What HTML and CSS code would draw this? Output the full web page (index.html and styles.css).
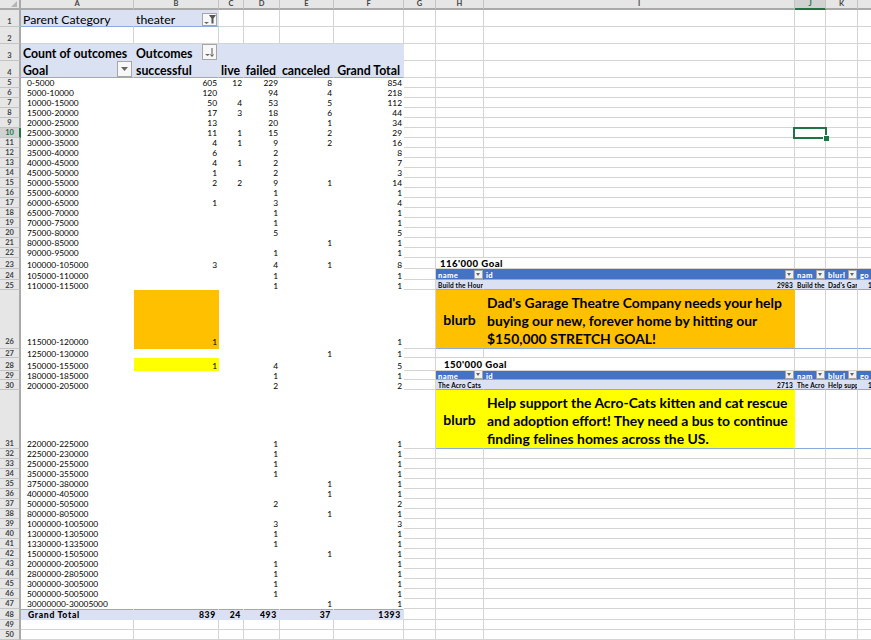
FILE: index.html
```html
<!DOCTYPE html>
<html lang="en">
<head>
    <meta charset="UTF-8">
    <meta name="viewport" content="width=device-width, initial-scale=1.0">
    <title>Theater outcomes</title>
    <link rel="stylesheet" href="styles.css">
</head>
<body>
<table class="sheet">
    <colgroup>
        <col class="c-hd"><col class="c-a"><col class="c-b"><col class="c-c"><col class="c-d"><col class="c-e"><col class="c-f"><col class="c-g"><col class="c-h"><col class="c-i"><col class="c-j"><col class="c-k"><col class="c-l">
    </colgroup>
    <tr class="heads">
        <th class="corner"></th><th>A</th><th>B</th><th>C</th><th>D</th><th>E</th><th>F</th><th>G</th><th>H</th><th>I</th><th class="sel-col">J</th><th>K</th><th></th>
    </tr>
    <tr class="h17 page-filter"><th>1</th><td class="big">Parent Category</td><td class="big">theater<span class="btn btn-funnel"><svg width="15" height="12" viewBox="0 0 15 12"><path d="M2 9h5l-2.500 2z" fill="#666"/><path d="M7 2h7l-2.500 3.500v5h-2v-5z" fill="#555"/></svg></span></td><td></td><td></td><td></td><td></td><td></td><td></td><td></td><td></td><td></td><td></td></tr>
    <tr class="h17"><th>2</th><td></td><td></td><td></td><td></td><td></td><td></td><td></td><td></td><td></td><td></td><td></td><td></td></tr>
    <tr class="h17 pv-head"><th>3</th><td>Count of outcomes</td><td>Outcomes<span class="btn btn-sort"><svg width="15" height="16" viewBox="0 0 15 16"><path d="M3 10h5l-2.500 2z" fill="#666"/><path d="M10 4v8M8.500 10.500l1.500 2 1.500-2" stroke="#555" fill="none"/></svg></span></td><td></td><td></td><td></td><td></td><td></td><td></td><td></td><td></td><td></td><td></td></tr>
    <tr class="h17 pv-head pv-last"><th>4</th><td>Goal<span class="btn btn-drop"><svg width="15" height="16" viewBox="0 0 15 16"><path d="M4 6h7l-3.500 4z" fill="#666"/></svg></span></td><td>successful</td><td>live</td><td>failed</td><td>canceled</td><td>Grand Total</td><td></td><td></td><td></td><td></td><td></td><td></td></tr>
    <tr class="pv"><th>5</th><td>0-5000</td><td>605</td><td>12</td><td>229</td><td>8</td><td>854</td><td></td><td></td><td></td><td></td><td></td><td></td></tr>
    <tr class="pv"><th>6</th><td>5000-10000</td><td>120</td><td></td><td>94</td><td>4</td><td>218</td><td></td><td></td><td></td><td></td><td></td><td></td></tr>
    <tr class="pv"><th>7</th><td>10000-15000</td><td>50</td><td>4</td><td>53</td><td>5</td><td>112</td><td></td><td></td><td></td><td></td><td></td><td></td></tr>
    <tr class="pv"><th>8</th><td>15000-20000</td><td>17</td><td>3</td><td>18</td><td>6</td><td>44</td><td></td><td></td><td></td><td></td><td></td><td></td></tr>
    <tr class="pv"><th>9</th><td>20000-25000</td><td>13</td><td></td><td>20</td><td>1</td><td>34</td><td></td><td></td><td></td><td></td><td></td><td></td></tr>
    <tr class="pv"><th class="sel-row">10</th><td>25000-30000</td><td>11</td><td>1</td><td>15</td><td>2</td><td>29</td><td></td><td></td><td></td><td class="active"><span class="cursor"></span></td><td></td><td></td></tr>
    <tr class="pv"><th>11</th><td>30000-35000</td><td>4</td><td>1</td><td>9</td><td>2</td><td>16</td><td></td><td></td><td></td><td></td><td></td><td></td></tr>
    <tr class="pv"><th>12</th><td>35000-40000</td><td>6</td><td></td><td>2</td><td></td><td>8</td><td></td><td></td><td></td><td></td><td></td><td></td></tr>
    <tr class="pv"><th>13</th><td>40000-45000</td><td>4</td><td>1</td><td>2</td><td></td><td>7</td><td></td><td></td><td></td><td></td><td></td><td></td></tr>
    <tr class="pv"><th>14</th><td>45000-50000</td><td>1</td><td></td><td>2</td><td></td><td>3</td><td></td><td></td><td></td><td></td><td></td><td></td></tr>
    <tr class="pv"><th>15</th><td>50000-55000</td><td>2</td><td>2</td><td>9</td><td>1</td><td>14</td><td></td><td></td><td></td><td></td><td></td><td></td></tr>
    <tr class="pv"><th>16</th><td>55000-60000</td><td></td><td></td><td>1</td><td></td><td>1</td><td></td><td></td><td></td><td></td><td></td><td></td></tr>
    <tr class="pv"><th>17</th><td>60000-65000</td><td>1</td><td></td><td>3</td><td></td><td>4</td><td></td><td></td><td></td><td></td><td></td><td></td></tr>
    <tr class="pv"><th>18</th><td>65000-70000</td><td></td><td></td><td>1</td><td></td><td>1</td><td></td><td></td><td></td><td></td><td></td><td></td></tr>
    <tr class="pv"><th>19</th><td>70000-75000</td><td></td><td></td><td>1</td><td></td><td>1</td><td></td><td></td><td></td><td></td><td></td><td></td></tr>
    <tr class="pv"><th>20</th><td>75000-80000</td><td></td><td></td><td>5</td><td></td><td>5</td><td></td><td></td><td></td><td></td><td></td><td></td></tr>
    <tr class="pv"><th>21</th><td>80000-85000</td><td></td><td></td><td></td><td>1</td><td>1</td><td></td><td></td><td></td><td></td><td></td><td></td></tr>
    <tr class="pv"><th>22</th><td>90000-95000</td><td></td><td></td><td>1</td><td></td><td>1</td><td></td><td></td><td></td><td></td><td></td><td></td></tr>
    <tr class="pv h11"><th>23</th><td>100000-105000</td><td>3</td><td></td><td>4</td><td>1</td><td>8</td><td></td><td class="goal" colspan="2">116'000 Goal</td><td></td><td></td><td></td></tr>
    <tr class="pv h11 t-head"><th>24</th><td>105000-110000</td><td></td><td></td><td>1</td><td></td><td>1</td><td></td><td>name<span class="mini"></span></td><td>id<span class="mini"></span></td><td>nam<span class="mini"></span></td><td>blurl<span class="mini"></span></td><td>go</td></tr>
    <tr class="pv t-row"><th>25</th><td>110000-115000</td><td></td><td></td><td>1</td><td></td><td>1</td><td></td><td>Build the Hour</td><td class="num">2983</td><td>Build the</td><td>Dad's Gar</td><td class="clip">1</td></tr>
    <tr class="pv h59 t-blurb"><th>26</th><td>115000-120000</td><td class="orange">1</td><td></td><td></td><td></td><td>1</td><td></td><td class="orange lbl">blurb</td><td class="orange txt">Dad's Garage Theatre Company needs your help buying our new, forever home by hitting our $150,000 STRETCH GOAL!</td><td></td><td></td><td></td></tr>
    <tr class="pv h9"><th>27</th><td>125000-130000</td><td></td><td></td><td></td><td>1</td><td>1</td><td></td><td></td><td></td><td></td><td></td><td></td></tr>
    <tr class="pv h13"><th>28</th><td>150000-155000</td><td class="yellow">1</td><td></td><td>4</td><td></td><td>5</td><td></td><td class="goal goal-in" colspan="2">150'000 Goal</td><td></td><td></td><td></td></tr>
    <tr class="pv h9 t-head"><th>29</th><td>180000-185000</td><td></td><td></td><td>1</td><td></td><td>1</td><td></td><td>name<span class="mini"></span></td><td>id<span class="mini"></span></td><td>nam<span class="mini"></span></td><td>blurl<span class="mini"></span></td><td>go</td></tr>
    <tr class="pv t-row"><th>30</th><td>200000-205000</td><td></td><td></td><td>2</td><td></td><td>2</td><td></td><td>The Acro Cats</td><td class="num">2713</td><td>The Acro</td><td>Help supp</td><td class="clip">15</td></tr>
    <tr class="pv h58 t-blurb"><th>31</th><td>220000-225000</td><td></td><td></td><td>1</td><td></td><td>1</td><td></td><td class="yellow lbl">blurb</td><td class="yellow txt">Help support the Acro-Cats kitten and cat rescue and adoption effort! They need a bus to continue finding felines homes across the US.</td><td></td><td></td><td></td></tr>
    <tr class="pv"><th>32</th><td>225000-230000</td><td></td><td></td><td>1</td><td></td><td>1</td><td></td><td></td><td></td><td></td><td></td><td></td></tr>
    <tr class="pv"><th>33</th><td>250000-255000</td><td></td><td></td><td>1</td><td></td><td>1</td><td></td><td></td><td></td><td></td><td></td><td></td></tr>
    <tr class="pv"><th>34</th><td>350000-355000</td><td></td><td></td><td>1</td><td></td><td>1</td><td></td><td></td><td></td><td></td><td></td><td></td></tr>
    <tr class="pv"><th>35</th><td>375000-380000</td><td></td><td></td><td></td><td>1</td><td>1</td><td></td><td></td><td></td><td></td><td></td><td></td></tr>
    <tr class="pv"><th>36</th><td>400000-405000</td><td></td><td></td><td></td><td>1</td><td>1</td><td></td><td></td><td></td><td></td><td></td><td></td></tr>
    <tr class="pv"><th>37</th><td>500000-505000</td><td></td><td></td><td>2</td><td></td><td>2</td><td></td><td></td><td></td><td></td><td></td><td></td></tr>
    <tr class="pv"><th>38</th><td>800000-805000</td><td></td><td></td><td></td><td>1</td><td>1</td><td></td><td></td><td></td><td></td><td></td><td></td></tr>
    <tr class="pv"><th>39</th><td>1000000-1005000</td><td></td><td></td><td>3</td><td></td><td>3</td><td></td><td></td><td></td><td></td><td></td><td></td></tr>
    <tr class="pv"><th>40</th><td>1300000-1305000</td><td></td><td></td><td>1</td><td></td><td>1</td><td></td><td></td><td></td><td></td><td></td><td></td></tr>
    <tr class="pv"><th>41</th><td>1330000-1335000</td><td></td><td></td><td>1</td><td></td><td>1</td><td></td><td></td><td></td><td></td><td></td><td></td></tr>
    <tr class="pv"><th>42</th><td>1500000-1505000</td><td></td><td></td><td></td><td>1</td><td>1</td><td></td><td></td><td></td><td></td><td></td><td></td></tr>
    <tr class="pv"><th>43</th><td>2000000-2005000</td><td></td><td></td><td>1</td><td></td><td>1</td><td></td><td></td><td></td><td></td><td></td><td></td></tr>
    <tr class="pv"><th>44</th><td>2800000-2805000</td><td></td><td></td><td>1</td><td></td><td>1</td><td></td><td></td><td></td><td></td><td></td><td></td></tr>
    <tr class="pv"><th>45</th><td>3000000-3005000</td><td></td><td></td><td>1</td><td></td><td>1</td><td></td><td></td><td></td><td></td><td></td><td></td></tr>
    <tr class="pv"><th>46</th><td>5000000-5005000</td><td></td><td></td><td>1</td><td></td><td>1</td><td></td><td></td><td></td><td></td><td></td><td></td></tr>
    <tr class="pv"><th>47</th><td>30000000-30005000</td><td></td><td></td><td></td><td>1</td><td>1</td><td></td><td></td><td></td><td></td><td></td><td></td></tr>
    <tr class="pv h11 total"><th>48</th><td>Grand Total</td><td>839</td><td>24</td><td>493</td><td>37</td><td>1393</td><td></td><td></td><td></td><td></td><td></td><td></td></tr>
    <tr><th>49</th><td></td><td></td><td></td><td></td><td></td><td></td><td></td><td></td><td></td><td></td><td></td><td></td></tr>
    <tr><th>50</th><td></td><td></td><td></td><td></td><td></td><td></td><td></td><td></td><td></td><td></td><td></td><td></td></tr>
    <tr><th></th><td></td><td></td><td></td><td></td><td></td><td></td><td></td><td></td><td></td><td></td><td></td><td></td></tr>
</table>
</body>
</html>
```

FILE: styles.css
```css
html, body {
    margin: 0;
    height: 640px;
    overflow: hidden;
    background: #fff;
}

.sheet {
    table-layout: fixed;
    width: 873px;
    border-collapse: separate;
    border-spacing: 0;
    font-family: "Lato", "Liberation Sans", sans-serif;
    font-size: 8.4px;
    line-height: 8px;
    color: #000;
}

.c-hd { width: 21px; }
.c-a { width: 113px; }
.c-b { width: 85px; }
.c-c { width: 25px; }
.c-d { width: 36px; }
.c-e { width: 54px; }
.c-f { width: 70px; }
.c-g { width: 32px; }
.c-h { width: 48px; }
.c-i { width: 311px; }
.c-j { width: 31px; }
.c-k { width: 32px; }
.c-l { width: 15px; }

tr { height: 10px; }
.h9 { height: 9px; }
.h11 { height: 11px; }
.h13 { height: 13px; }
.h17 { height: 17px; }
.h58 { height: 58px; }
.h59 { height: 59px; }

td, th {
    box-sizing: border-box;
    padding: 0 1px;
    overflow: hidden;
    white-space: nowrap;
    vertical-align: bottom;
}

td {
    border-right: 1px solid #d4d4d4;
    border-bottom: 1px solid #d4d4d4;
}

/* row and column headers */
th {
    background: #e6e6e6;
    border-right: 2px solid #a9a9a9;
    border-bottom: 1px solid #c4c4c4;
    font-size: 7.5px;
    font-weight: 700;
    color: #444;
    text-align: center;
}

.heads { height: 10px; }
.heads th {
    border-right: 1px solid #c4c4c4;
    border-bottom: 2px solid #a9a9a9;
    position: relative;
}

.heads .corner { border-right: 2px solid #a9a9a9; }
.corner::after {
    content: "";
    position: absolute;
    right: 2px;
    bottom: 1px;
    border-left: 6px solid transparent;
    border-bottom: 6px solid #b5b5b5;
}

.heads .sel-col {
    background: #d2d2d2;
    color: #217346;
    border-bottom-color: #217346;
}

.sel-row {
    background: #d2d2d2;
    color: #217346;
    border-right-color: #217346;
}

/* text place per row height */
.h9 td, .h9 th,
.h11 td, .h11 th,
.t-row td, .t-row th { line-height: 6px; }
.h59 td, .h59 th { padding-bottom: 2px; }

/* pivot table */
.page-filter td:nth-of-type(-n+2),
.pv-head td:nth-of-type(-n+6),
.total td:nth-of-type(-n+6) {
    background: #d9e1f2;
    border-right-color: #d9e1f2;
    border-bottom-color: #d9e1f2;
}

.page-filter td:nth-of-type(-n+2) { border-bottom-color: #8ea9db; }
.pv-last td:nth-of-type(-n+6) { border-bottom-color: #8ea9db; }

.big,
.pv-head td {
    font-size: 12.3px;
    line-height: 12px;
    position: relative;
}

.pv-head td { font-weight: 700; }
.pv-head td:nth-of-type(n+3):nth-of-type(-n+6) {
    text-align: right;
    padding-right: 3px;
}
.pv-head td:nth-of-type(3) { padding-right: 4px; }
.pv-head td:nth-of-type(1),
.pv-head td:nth-of-type(2),
.page-filter td { padding-left: 2px; }

.pv td:nth-of-type(-n+6) {
    border-right-color: #fff;
    border-bottom-color: #fff;
}

.pv td:nth-of-type(1) { padding-left: 6px; }
.pv td:nth-of-type(n+2):nth-of-type(-n+6) {
    text-align: right;
    padding-right: 1px;
}

.h11.total td, .h11.total th { line-height: 8px; }
.total td { font-size: 8.6px; font-weight: 900; letter-spacing: 0.7px; }
.pv.total td:nth-of-type(n+2):nth-of-type(-n+6) { padding-right: 2px; }
.pv.total td:nth-of-type(1) { padding-left: 7px; }
.pv.total td:nth-of-type(-n+6) {
    border-right-color: #d9e1f2;
    border-bottom-color: #d9e1f2;
    box-shadow: inset 0 1px 0 #8ea9db;
    background: #d9e1f2;
}

.pv td.orange { background: #ffc000; border-right-color: #ffc000; border-bottom-color: #ffc000; }
.pv td.yellow { background: #ffff00; border-right-color: #ffff00; border-bottom-color: #ffff00; }

/* filter buttons */
.btn {
    position: absolute;
    right: 1px;
    width: 15px;
    box-sizing: border-box;
    background: #f7f7f7;
    border: 1px solid #a6a6a6;
    display: flex;
}

.btn svg { margin: -1px; flex: none; }
.btn-funnel { height: 13px; bottom: 0; }
.btn-sort { height: 16px; bottom: 0; }
.btn-drop { height: 16px; bottom: 0; }

/* selected cell */
.pv td.active { position: relative; overflow: visible; }
.cursor {
    position: absolute;
    left: -2px;
    top: -1px;
    width: 34px;
    height: 12px;
    box-sizing: border-box;
    border: 2px solid #217346;
}

.cursor::after {
    content: "";
    position: absolute;
    right: -4px;
    bottom: -4px;
    width: 5px;
    height: 5px;
    background: #217346;
    border-left: 1px solid #fff;
    border-top: 1px solid #fff;
}

/* goal tables */
.pv td.goal {
    font-size: 9.6px;
    line-height: 8px;
    font-weight: 900;
    letter-spacing: 0.45px;
    padding-left: 4px;
}

.pv td.goal-in { padding-left: 8px; padding-bottom: 1px; }

.t-head td:nth-of-type(n+8) {
    background: #4472c4;
    color: #fff;
    font-size: 7.6px;
    font-weight: 900;
    border-right-color: #4472c4;
    border-bottom-color: #8ea9db;
    position: relative;
    letter-spacing: 0.4px;
    padding-left: 2px;
}

.h11.t-head td:nth-of-type(n+8) { line-height: 8px; }

.t-row td:nth-of-type(n+8) {
    background: #d9e1f2;
    font-size: 6.5px;
    font-weight: 700;
    letter-spacing: 0.2px;
    border-right-color: #d9e1f2;
    border-bottom-color: #8ea9db;
    padding-left: 2px;
}

.t-row td.num { text-align: right; }
.t-row td.clip { padding-left: 10px; }

.t-blurb td:nth-of-type(n+8) { border-bottom-color: #8ea9db; }
.pv td.lbl {
    font-size: 14px;
    line-height: 18px;
    font-weight: 700;
    text-align: center;
    vertical-align: middle;
    padding: 1px 0 0;
}

.pv td.txt {
    font-size: 13.9px;
    line-height: 18px;
    font-weight: 700;
    white-space: normal;
    padding: 4px 2px 0 3px;
    vertical-align: middle;
}

.mini {
    position: absolute;
    right: 0;
    bottom: 0;
    width: 9px;
    height: 9px;
    box-sizing: border-box;
    background: #f2f2f2;
    border: 1px solid #a6a6a6;
}

.mini::after {
    content: "";
    position: absolute;
    left: 1px;
    top: 2px;
    border-left: 2.500px solid transparent;
    border-right: 2.500px solid transparent;
    border-top: 3px solid #666;
}
```
